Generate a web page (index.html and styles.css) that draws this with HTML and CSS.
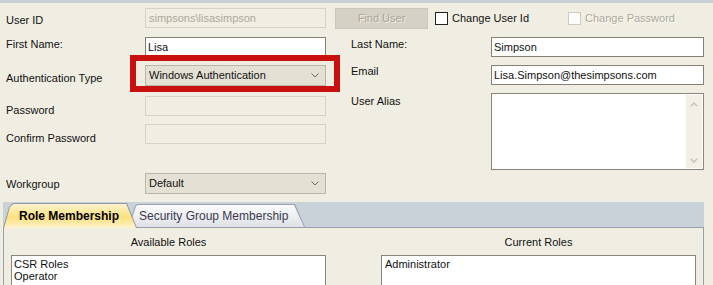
FILE: index.html
```html
<!DOCTYPE html>
<html>
<head>
<meta charset="utf-8">
<title>User</title>
<link rel="stylesheet" href="styles.css">
</head>
<body>
<div class="topbar"></div>
<div class="form">
  <div class="row r1">
    <div class="lbl mt6">User ID</div>
    <div class="tb tb-dis">simpsons\lisasimpson</div>
    <div class="btn-dis">Find User</div>
    <div class="chk chk-1"><span class="box"></span><span>Change User Id</span></div>
    <div class="chk chk-2 is-dis"><span class="box"></span><span>Change Password</span></div>
  </div>
  <div class="cols">
    <div class="col col-left">
      <div class="row h28"><div class="lbl mt1">First Name:</div><div class="tb">Lisa</div></div>
      <div class="row h31"><div class="lbl mt7">Authentication Type</div><div class="combo"><span>Windows Authentication</span><svg class="chev" width="8" height="5" viewBox="0 0 8 5"><path d="M0.5 0.5 L4 4 L7.5 0.5" fill="none" stroke="#6f6c62" stroke-width="1"/></svg></div></div>
      <div class="row h28"><div class="lbl mt8">Password</div><div class="tb tb-dis"></div></div>
      <div class="row h49"><div class="lbl mt8">Confirm Password</div><div class="tb tb-dis"></div></div>
      <div class="row h21"><div class="lbl mt5">Workgroup</div><div class="combo"><span>Default</span><svg class="chev" width="8" height="5" viewBox="0 0 8 5"><path d="M0.5 0.5 L4 4 L7.5 0.5" fill="none" stroke="#6f6c62" stroke-width="1"/></svg></div></div>
    </div>
    <div class="col col-right">
      <div class="row h28"><div class="lbl mt1">Last Name:</div><div class="tb">Simpson</div></div>
      <div class="row h28"><div class="lbl mt0">Email</div><div class="tb">Lisa.Simpson@thesimpsons.com</div></div>
      <div class="row"><div class="lbl mt2">User Alias</div>
        <div class="textarea">
          <div class="ta-body"></div>
          <div class="vscroll">
            <svg width="8" height="5" viewBox="0 0 8 5"><path d="M0.8 4.2 L4 1 L7.2 4.2" fill="none" stroke="#c6c2b4" stroke-width="1.5"/></svg>
            <svg width="8" height="5" viewBox="0 0 8 5"><path d="M0.8 0.8 L4 4 L7.2 0.8" fill="none" stroke="#c6c2b4" stroke-width="1.5"/></svg>
          </div>
        </div>
      </div>
    </div>
  </div>
</div>

<div class="tabs">
  <div class="tab tab-active"><span>Role Membership</span></div>
  <div class="tab tab-idle"><span>Security Group Membership</span></div>
</div>
<div class="panel">
  <div class="list-col">
    <div class="list-head">Available Roles</div>
    <div class="listbox">
      <div>CSR Roles</div>
      <div>Operator</div>
    </div>
  </div>
  <div class="list-col">
    <div class="list-head">Current Roles</div>
    <div class="listbox listbox-r">
      <div>Administrator</div>
    </div>
  </div>
</div>

<div class="highlight"></div>
</body>
</html>
```
FILE: styles.css
```css
* { box-sizing: border-box; }

html, body { margin: 0; padding: 0; }

body {
  width: 713px;
  height: 285px;
  overflow: hidden;
  position: relative;
  background: #f0eee3;
  font-family: "Liberation Sans", Arial, sans-serif;
  font-size: 11px;
  color: #111;
}

.topbar {
  height: 3px;
  background: #c9ced2;
}

.form {
  padding: 5px 0 0 6px;
}

.row {
  display: flex;
  align-items: flex-start;
}

.r1 { height: 29px; }
.h21 { height: 21px; }
.h28 { height: 28px; }
.h31 { height: 31px; }
.h49 { height: 49px; }

.lbl {
  flex: none;
  width: 139px;
  line-height: 13px;
  white-space: nowrap;
}

.mt0 { margin-top: 0; }
.mt1 { margin-top: 1px; }
.mt2 { margin-top: 2px; }
.mt5 { margin-top: 5px; }
.mt6 { margin-top: 6px; }
.mt7 { margin-top: 7px; }
.mt8 { margin-top: 8px; }

.cols {
  display: flex;
  align-items: flex-start;
}

.col-left { width: 320px; }

.col-right { margin-left: 25px; }
.col-right .lbl { width: 140px; }

.tb {
  flex: none;
  width: 181px;
  height: 20px;
  border: 1px solid #858174;
  background: #fff;
  padding: 0 2px;
  line-height: 18px;
  white-space: nowrap;
  overflow: hidden;
}

.col-right .tb { width: 213px; }

.tb-dis {
  background: #f0eee3;
  border-color: #d6d3c6;
  color: #aca899;
  padding-left: 3px;
}

.combo {
  flex: none;
  width: 181px;
  height: 21px;
  border: 1px solid #bab6a6;
  background: #e4e1d4;
  padding: 0 6px 0 3px;
  line-height: 19px;
  display: flex;
  align-items: center;
  justify-content: space-between;
  white-space: nowrap;
}

.chev { display: block; }

.btn-dis {
  flex: none;
  width: 93px;
  height: 21px;
  margin-left: 9px;
  border: 1px solid #cbc7b9;
  background: #d5d1c4;
  color: #aaa698;
  text-shadow: 1px 1px 0 #eeede6;
  text-align: center;
  line-height: 19px;
}

.chk {
  flex: none;
  display: flex;
  align-items: center;
  gap: 4px;
  height: 13px;
  margin-top: 4px;
  line-height: 13px;
  white-space: nowrap;
}

.chk-1 { margin-left: 7px; }
.chk-2 { margin-left: 39px; }

.box {
  flex: none;
  width: 13px;
  height: 13px;
  border: 1px solid #222;
  background: #fff;
}

.is-dis { color: #aca899; text-shadow: 1px 1px 0 #fbfaf6; }
.is-dis .box { border-color: #cfccbf; background: #fcfcfa; }

.textarea {
  flex: none;
  width: 213px;
  height: 77px;
  border: 1px solid #8a8679;
  background: #fff;
  padding: 1px;
  display: flex;
}

.ta-body { flex: 1; }

.vscroll {
  flex: none;
  width: 16px;
  background: #f1efe6;
  display: flex;
  flex-direction: column;
  align-items: center;
  justify-content: space-between;
  padding: 7px 0 5px;
}

.vscroll svg { display: block; }

/* tabs */
.tabs {
  margin: 8px 0 0 3px;
  width: 701px;
  height: 25px;
  background: #c9d1d9;
  display: flex;
  align-items: flex-end;
}

.tab {
  position: relative;
  flex: none;
  font-size: 12px;
  line-height: 14px;
  white-space: nowrap;
}

.tab span { position: relative; }

.tab::before {
  content: "";
  position: absolute;
  left: 1px;
  right: 1px;
  top: 1px;
  bottom: 0;
}

.tab-active {
  z-index: 2;
  width: 134px;
  height: 25px;
  margin-bottom: -1px;
  padding: 6px 0 0 16px;
  font-weight: bold;
  color: #000;
  background: #8f98a3;
  clip-path: polygon(0 25px, 6px 4px, 10px 0, 124px 0, 134px 25px);
}

.tab-active::before {
  background: linear-gradient(#fbf1d0 0%, #fde9a2 30%, #fde07f 55%, #feeaa9 80%, #fff4d2 100%);
  clip-path: polygon(0 24px, 6px 3px, 9.5px 0, 122.3px 0, 132px 24px);
}

.tab-idle {
  z-index: 1;
  width: 177px;
  height: 23px;
  margin-left: -9px;
  padding: 5px 0 0 11px;
  color: #3b3b4f;
  background: #9ba4ae;
  clip-path: polygon(0 23px, 7px 2px, 9px 0, 167px 0, 177px 23px);
}

.tab-idle::before {
  background: linear-gradient(#fbfbfb 0%, #eceef0 55%, #dde0e5 100%);
  clip-path: polygon(0 22px, 7px 1.5px, 8.5px 0, 165px 0, 175px 22px);
}

.panel {
  margin-left: 3px;
  width: 701px;
  height: 58px;
  border: 1px solid #97a1ad;
  border-bottom: 0;
  padding: 8px 7px 0;
  display: grid;
  grid-template-columns: 315px 315px;
  column-gap: 55px;
  overflow: hidden;
}

.list-head {
  text-align: center;
  line-height: 13px;
  height: 13px;
}

.listbox {
  margin-top: 6px;
  height: 40px;
  border: 1px solid #8a8679;
  background: #fff;
  padding: 2px 2px 0;
  line-height: 12px;
}

.listbox-r { padding-left: 3px; }

.highlight {
  position: absolute;
  left: 130px;
  top: 55px;
  width: 210px;
  height: 37px;
  border: 6px solid #c8100e;
  pointer-events: none;
}
```
